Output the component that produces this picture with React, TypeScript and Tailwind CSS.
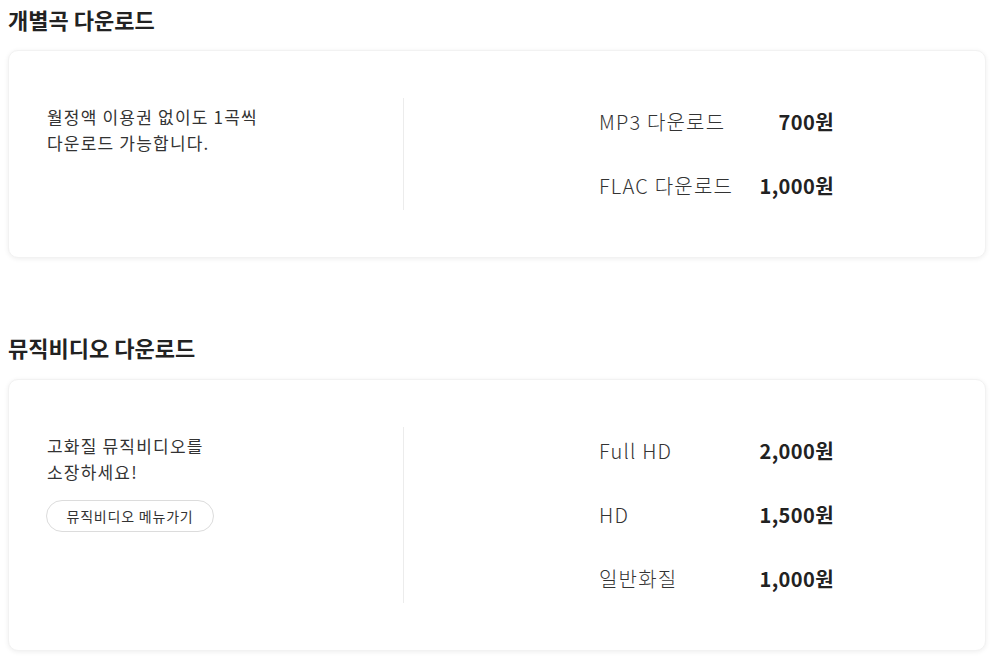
const font = { fontFamily: '"Noto Sans CJK KR", "Noto Sans", sans-serif' };

type Row = { label: string; price: string };

function PriceCard({ desc, rows, button }: { desc: string[]; rows: Row[]; button?: string }) {
  return (
    <div className="ml-2 w-[978px] rounded-[10px] border border-[#f2f2f2] bg-white py-[47px] shadow-[0_1px_5px_rgba(0,0,0,0.07)]">
      <div className="flex">
        <div className="w-[395px] shrink-0 border-r border-[#ececec] pl-[38px] pt-[6px]">
          {desc.map(line => (
            <p key={line} className="text-[17px] leading-[26px] tracking-[1.2px] text-[#333]">
              {line}
            </p>
          ))}
          {button && (
            <button className="mt-[15px] -ml-[1px] h-[32px] w-[168px] rounded-full border border-[#dcdcdc] text-[14px] tracking-[0.8px] text-[#333]">
              {button}
            </button>
          )}
        </div>
        <div className="flex flex-col gap-8 py-2 pl-[195px]">
          {rows.map(r => (
            <div key={r.label} className="flex h-8 w-[235px] items-center justify-between">
              <span className="text-[20px] font-light tracking-[1.2px] text-[#333]">{r.label}</span>
              <span className="text-[20px] font-bold tracking-[0.4px] text-[#222]">{r.price}</span>
            </div>
          ))}
        </div>
      </div>
    </div>
  );
}

export default function App() {
  return (
    <div className="min-h-[661px] bg-white pt-[5px]" style={font}>
      <h2 className="pl-2 text-[22px] font-bold leading-7 text-[#222]">개별곡 다운로드</h2>
      <div className="mt-[17px]">
        <PriceCard
          desc={['월정액 이용권 없이도 1곡씩', '다운로드 가능합니다.']}
          rows={[
            { label: 'MP3 다운로드', price: '700원' },
            { label: 'FLAC 다운로드', price: '1,000원' },
          ]}
        />
      </div>

      <h2 className="mt-[75px] pl-2 text-[22px] font-bold leading-7 text-[#222]">뮤직비디오 다운로드</h2>
      <div className="mt-[18px]">
        <PriceCard
          desc={['고화질 뮤직비디오를', '소장하세요!']}
          button="뮤직비디오 메뉴가기"
          rows={[
            { label: 'Full HD', price: '2,000원' },
            { label: 'HD', price: '1,500원' },
            { label: '일반화질', price: '1,000원' },
          ]}
        />
      </div>
    </div>
  );
}
